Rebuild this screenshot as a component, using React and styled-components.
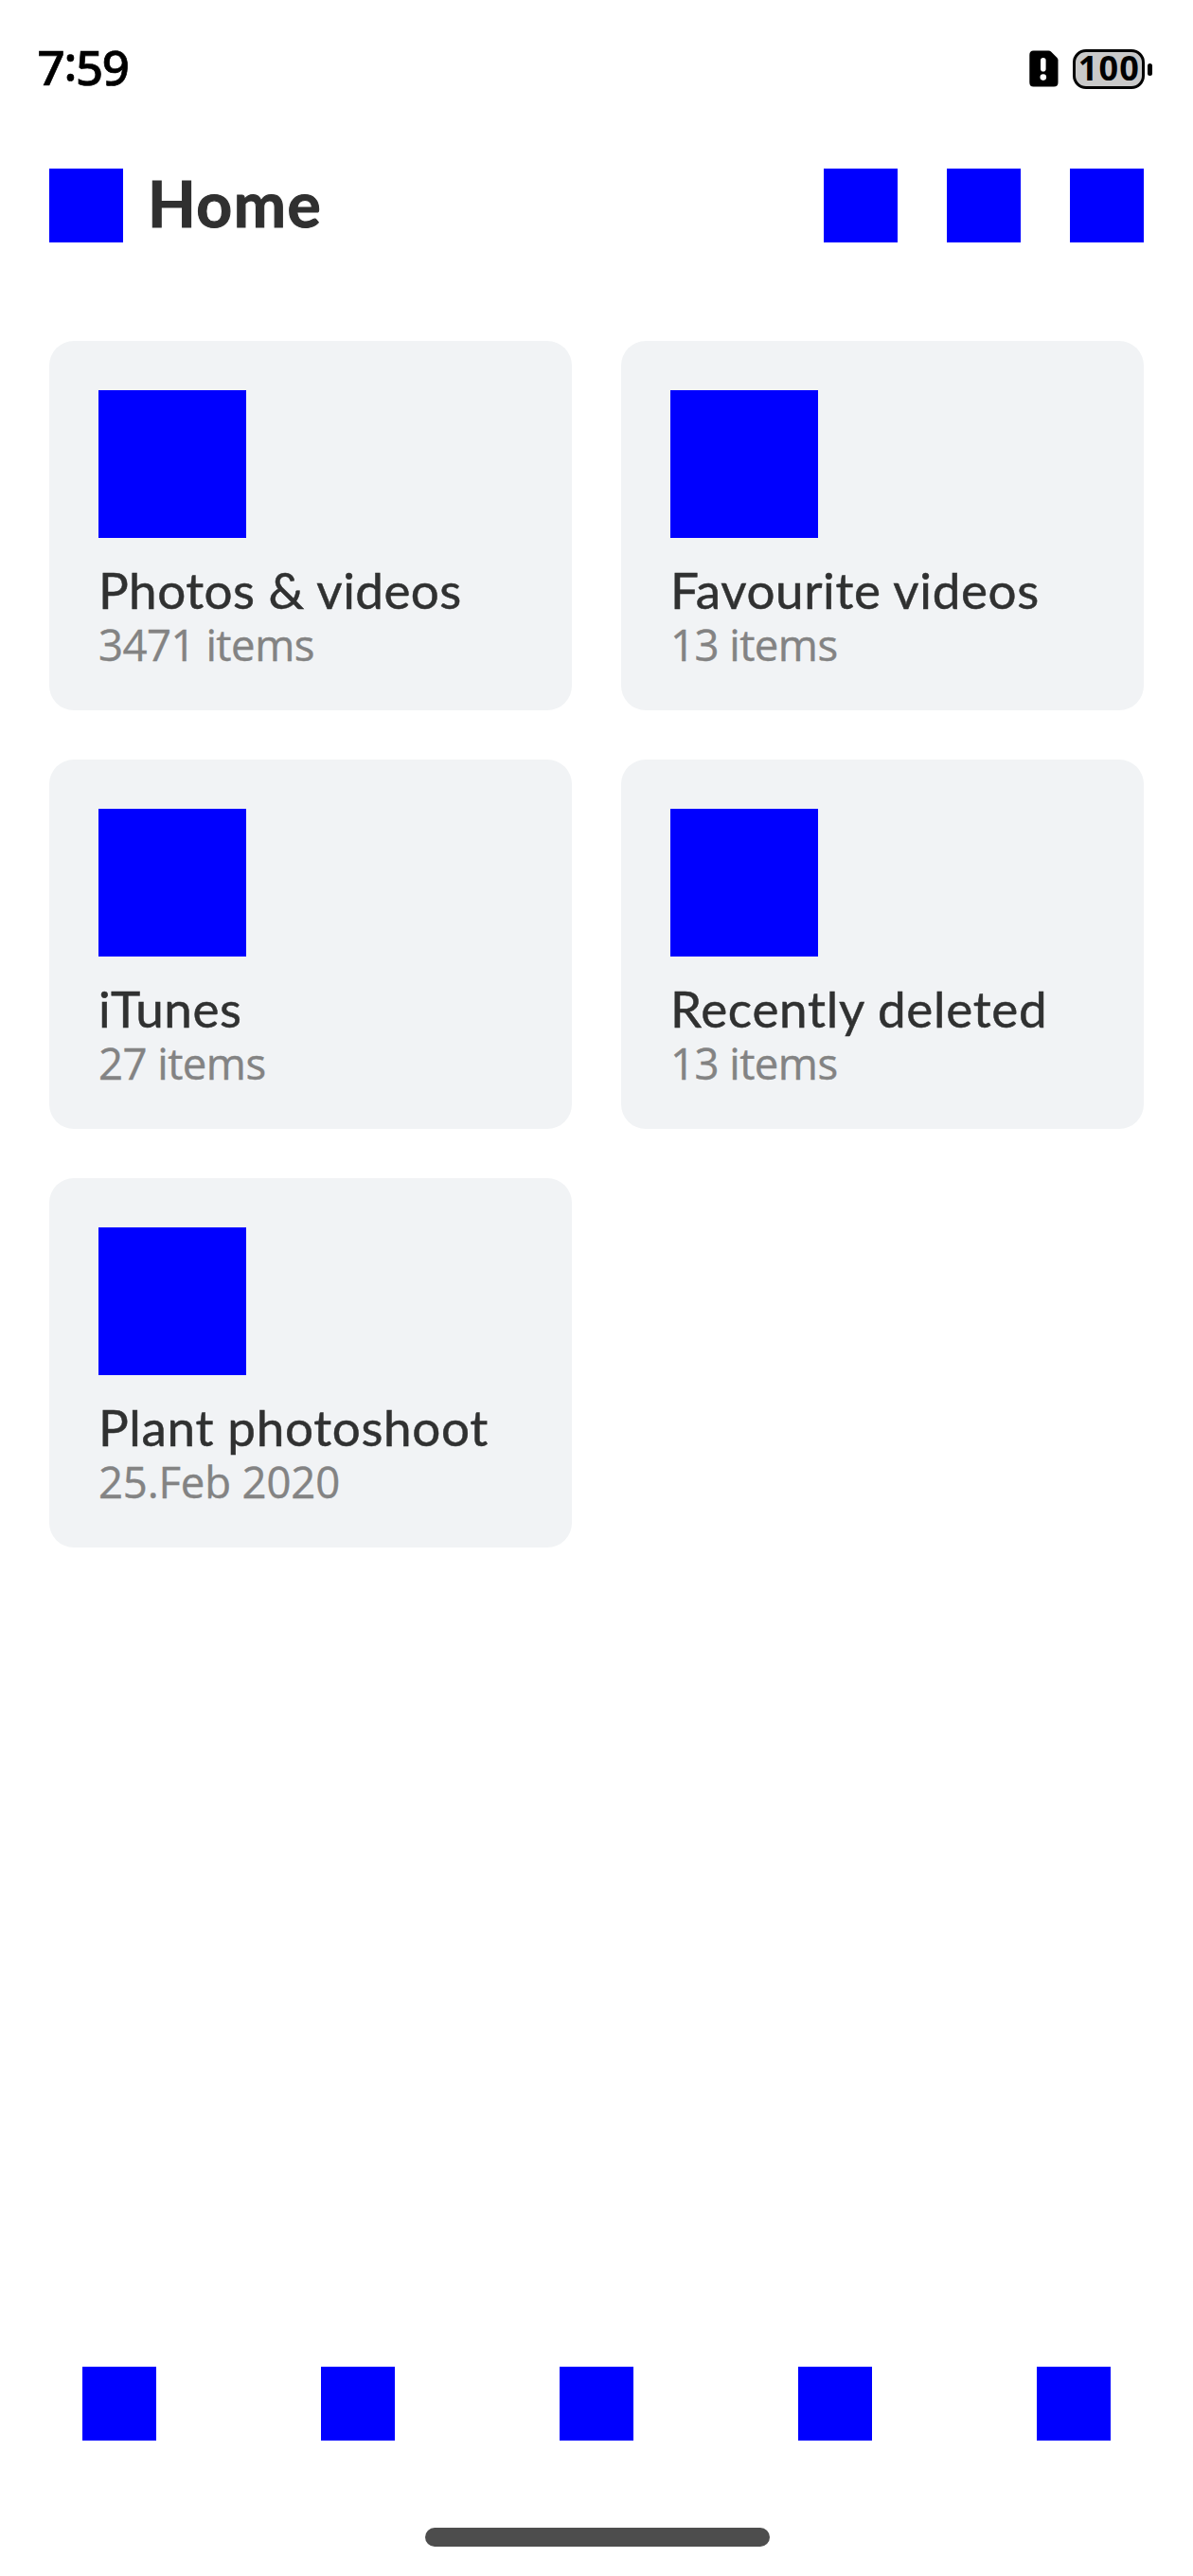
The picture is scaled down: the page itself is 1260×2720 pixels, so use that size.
import React from "react";
import styled, { createGlobalStyle } from "styled-components";

const GlobalStyle = createGlobalStyle`
  * { box-sizing: border-box; }
  body { margin: 0; background: #fff; }
`;

const Screen = styled.div`
  display: flex;
  flex-direction: column;
  width: 1260px;
  height: 2720px;
  background: #fff;
  overflow: hidden;
  font-family: Lato, "Noto Sans", sans-serif;
`;

const StatusBar = styled.div`
  display: flex;
  justify-content: space-between;
  align-items: flex-start;
  height: 178px;
  padding: 35px 43px 0 39.5px;
`;

const Clock = styled.time`
  font: 500 51px/70px "Noto Sans", sans-serif;
  letter-spacing: -1.3px;
  color: #000;
  -webkit-text-stroke: 0.7px #000;
`;

const Colon = styled.span`
  line-height: 0;
  vertical-align: 5px;
`;

const StatusIcons = styled.div`
  display: flex;
  align-items: center;
  height: 42px;
  margin-top: 17px;
`;

const CardAlert = styled.svg`
  display: block;
  width: 31px;
  height: 39px;
  margin-right: 15.5px;
  margin-top: -1px;
`;

const BatteryBody = styled.div`
  display: flex;
  width: 75.5px;
  height: 42px;
  padding-left: 2.8px;
  border: 3.5px solid #000;
  border-radius: 14px;
  background: #c9c9c9;
`;

const BatteryLevel = styled.span`
  font: 700 36px/33px "Open Sans", sans-serif;
  letter-spacing: 1.1px;
  color: #000;
`;

const BatteryTip = styled.span`
  width: 5px;
  height: 13px;
  margin-left: 3.5px;
  border-radius: 2.5px;
  background: #000;
`;

const Header = styled.header`
  display: flex;
  align-items: flex-start;
  height: 78px;
  padding: 0 52px;
`;

const Square = styled.div`
  flex: none;
  width: ${(p) => p.$size}px;
  height: ${(p) => p.$size}px;
  background: #00f;
`;

const Title = styled.h1`
  flex: 1;
  margin: 0 0 0 26px;
  font-size: 66px;
  font-weight: 700;
  line-height: 73px;
  letter-spacing: 1.5px;
  color: #303030;
  -webkit-text-stroke: 1.1px #303030;
`;

const Actions = styled.div`
  display: flex;
  gap: 52px;
`;

const Albums = styled.main`
  flex: 1;
  display: grid;
  grid-template-columns: 1fr 1fr;
  grid-auto-rows: 390px;
  align-content: start;
  gap: 52px;
  padding: 104px 52px 0;
`;

const Card = styled.article`
  padding: 52px;
  border-radius: 26px;
  background: #f1f3f5;
`;

const AlbumName = styled.h2`
  margin: 25px 0 0;
  font-size: 53px;
  font-weight: 400;
  line-height: 60px;
  letter-spacing: ${(p) => p.$tracking}px;
  white-space: nowrap;
  color: #303131;
  -webkit-text-stroke: 0.5px #303131;
`;

const AlbumMeta = styled.p`
  margin: 0;
  font: 400 45.5px/54px "Open Sans", sans-serif;
  letter-spacing: ${(p) => p.$tracking}px;
  white-space: nowrap;
  color: #838383;
  -webkit-text-stroke: 0.4px #838383;
`;

const TabBar = styled.nav`
  display: grid;
  grid-template-columns: repeat(5, 1fr);
  justify-items: center;
  height: 170px;
`;

const HomeIndicator = styled.div`
  align-self: center;
  width: 364px;
  height: 20px;
  margin: 0 0 31px 1px;
  border-radius: 10px;
  background: #4d4d4d;
`;

const albums = [
  { name: "Photos & videos", meta: "3471 items", nameGap: 0.45, metaGap: -0.5 },
  { name: "Favourite videos", meta: "13 items", nameGap: 0.6, metaGap: -0.55 },
  { name: "iTunes", meta: "27 items", nameGap: 0.5, metaGap: -0.55 },
  { name: "Recently deleted", meta: "13 items", nameGap: 0.7, metaGap: -0.55 },
  { name: "Plant photoshoot", meta: "25.Feb 2020", nameGap: 0.67, metaGap: -0.15 },
];

const tabs = ["one", "two", "three", "four", "five"];

export default function App() {
  return (
    <Screen>
      <GlobalStyle />
      <StatusBar>
        <Clock>
          7<Colon>:</Colon>59
        </Clock>
        <StatusIcons>
          <CardAlert viewBox="0 0 31 39">
            <path d="M4.500 0.500H20.500Q22 0.500 23 1.500L29.500 8Q30.500 9 30.500 10.500V34Q30.500 38.500 26 38.500H4.500Q0.300 38.500 0.300 34V5Q0.300 0.500 4.500 0.500Z" fill="#000" />
            <rect x="12" y="8" width="5.600" height="14.500" rx="2.800" fill="#fff" />
            <circle cx="14.800" cy="28.600" r="3.300" fill="#fff" />
          </CardAlert>
          <BatteryBody>
            <BatteryLevel>100</BatteryLevel>
          </BatteryBody>
          <BatteryTip />
        </StatusIcons>
      </StatusBar>
      <Header>
        <Square $size={78} />
        <Title>Home</Title>
        <Actions>
          <Square $size={78} />
          <Square $size={78} />
          <Square $size={78} />
        </Actions>
      </Header>
      <Albums>
        {albums.map((a) => (
          <Card key={a.name}>
            <Square $size={156} />
            <AlbumName $tracking={a.nameGap}>{a.name}</AlbumName>
            <AlbumMeta $tracking={a.metaGap}>{a.meta}</AlbumMeta>
          </Card>
        ))}
      </Albums>
      <TabBar>
        {tabs.map((t) => (
          <Square key={t} $size={78} />
        ))}
      </TabBar>
      <HomeIndicator />
    </Screen>
  );
}
